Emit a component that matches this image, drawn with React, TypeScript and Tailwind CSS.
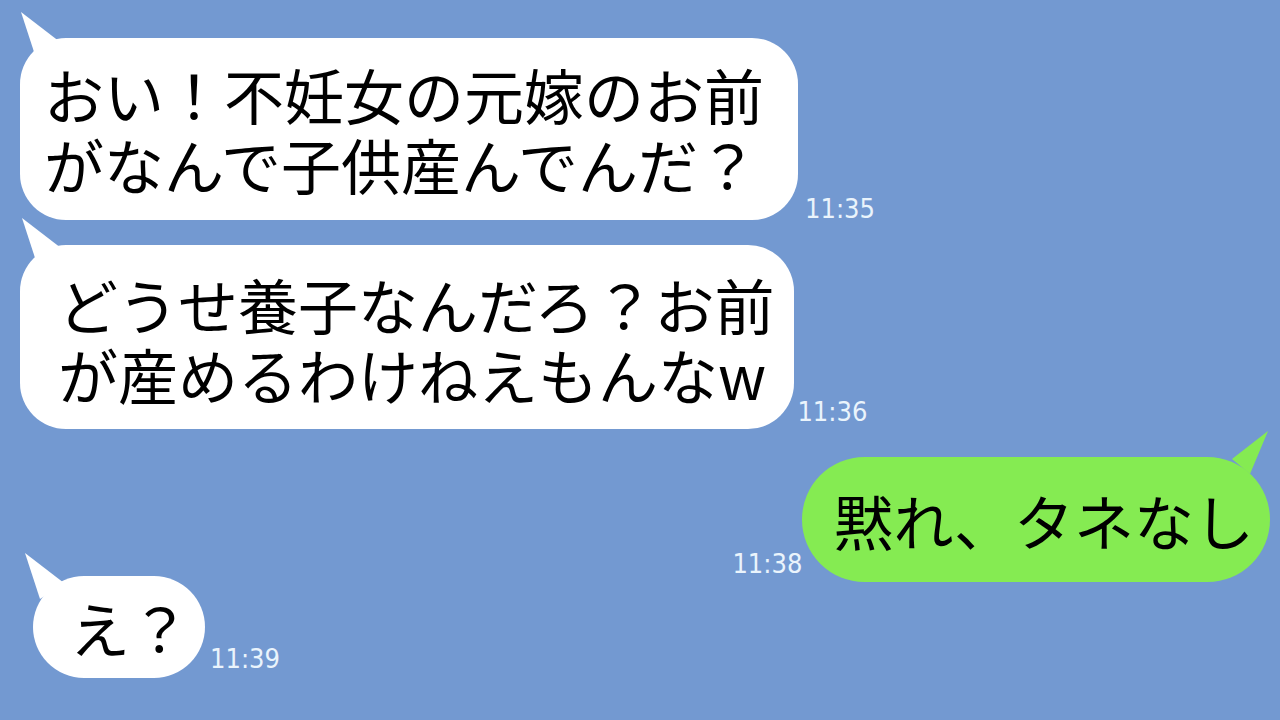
import React from 'react';

const jp = "font-['Noto_Sans_CJK_JP','Noto_Sans',sans-serif]";
const time = "font-['DejaVu_Sans_Condensed','DejaVu_Sans',sans-serif] font-stretch-condensed text-[27px] leading-none text-[#eaf4fc]";

const TailLeft = ({ className, color }: { className: string; color: string }) => (
  <svg className={`absolute ${className}`} width="44" height="50" viewBox="0 0 44 50">
    <polygon points="1,0 40,30 16,46" fill={color} />
  </svg>
);

const App = () => {
  return (
    <div className={`w-[1280px] h-[720px] overflow-hidden bg-[#7399d1] ${jp}`}>
      <div className="flex flex-col pt-[38px]">
        {/* message 1 */}
        <div className="flex items-end pl-[20px]">
          <div className="relative">
            <TailLeft className="left-0 -top-[26px]" color="#ffffff" />
            <div className="relative bg-white rounded-[46px] pl-[24px] pr-[34px] pt-[21px] pb-[21px] text-[60px] leading-[70px] text-black whitespace-nowrap">
              おい！不妊女の元嫁のお前
              <br />
              がなんで子供産んでんだ？
            </div>
          </div>
          <span className={`${time} ml-[7px] -mb-[2px]`}>11:35</span>
        </div>

        {/* message 2 */}
        <div className="flex items-end pl-[20px] mt-[25px]">
          <div className="relative">
            <TailLeft className="left-[1px] -top-[27px]" color="#ffffff" />
            <div className="relative bg-white rounded-[46px] pl-[38px] pr-[20px] pt-[24px] pb-[20px] text-[60px] leading-[70px] text-black whitespace-nowrap">
              どうせ養子なんだろ？お前
              <br />
              が産めるわけねえもんなw
            </div>
          </div>
          <span className={`${time} ml-[3px] mb-[4px]`}>11:36</span>
        </div>

        {/* message 3 (mine) */}
        <div className="flex items-end justify-end pr-[10px] mt-[28px]">
          <span className={`${time} mb-[5px]`}>11:38</span>
          <div className="relative">
            <svg className="absolute right-0 -top-[26px]" width="42" height="45" viewBox="0 0 42 45">
              <polygon points="4,28 40,0 22,43" fill="#85eb52" />
            </svg>
            <div className="relative bg-[#85eb52] rounded-full pl-[31px] pr-[16px] pt-[28px] pb-[27px] text-[60px] leading-[70px] text-black whitespace-nowrap">
              黙れ、タネなし
            </div>
          </div>
        </div>

        {/* message 4 */}
        <div className="flex items-end pl-[33px] -mt-[6px]">
          <div className="relative">
            <TailLeft className="-left-[9px] -top-[23px]" color="#ffffff" />
            <div className="relative bg-white rounded-full pl-[37px] pr-[15px] py-[16px] text-[60px] leading-[70px] text-black whitespace-nowrap">
              え？
            </div>
          </div>
          <span className={`${time} ml-[5px] mb-[6px]`}>11:39</span>
        </div>
      </div>
    </div>
  );
};

export default App;
